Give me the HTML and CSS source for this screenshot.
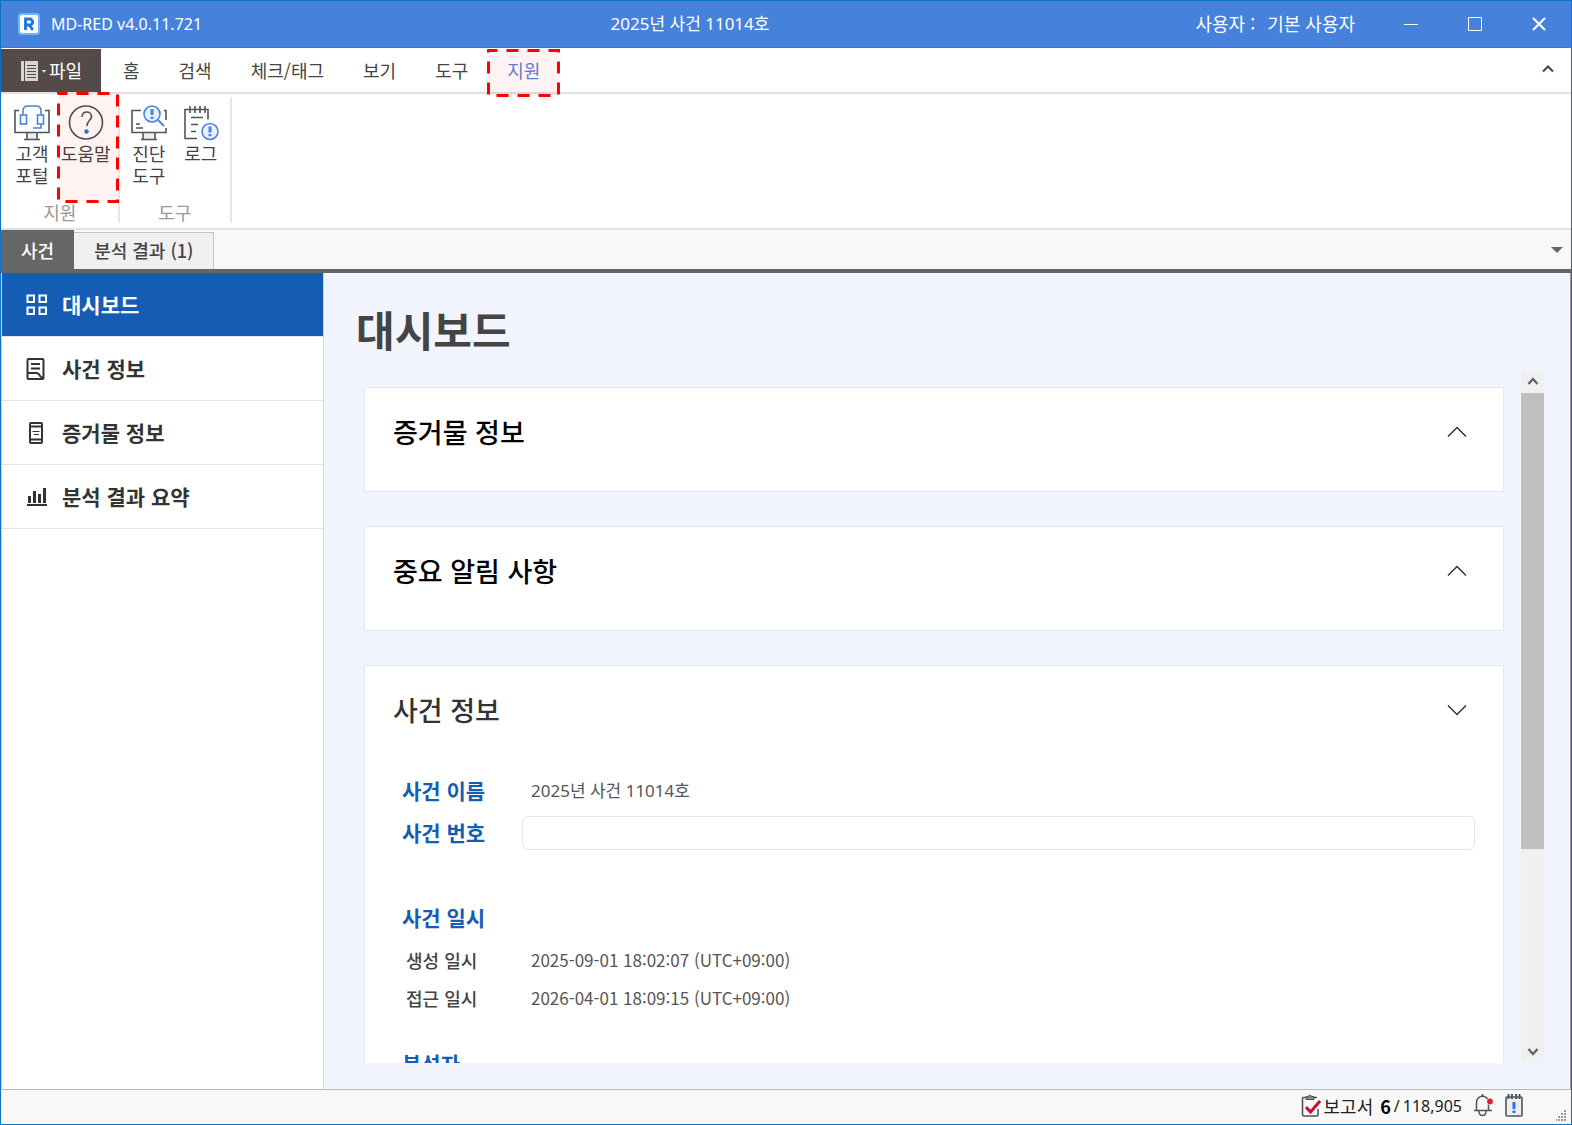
FILE: index.html
```html
<!DOCTYPE html>
<html lang="ko">
  <head>
    <meta charset="UTF-8" />
    <meta name="viewport" content="width=device-width, initial-scale=1.0" />
    <title>MD-RED v4.0.11.721</title>
    <link rel="stylesheet" href="styles.css">
  </head>
  <body>
    <div class="window">
      <header class="titlebar">
        <div class="brand">
          <svg class="logo" width="22" height="22" viewBox="0 0 22 22">
            <rect width="22" height="22" rx="4" fill="#6cb8f8" />
            <rect x="2" y="2" width="18" height="18" rx="2" fill="#fff" />
            <path d="M7.5 17V6h4.2a2.9 2.9 0 0 1 0 6H7.5M11.5 12l3.3 5" fill="none" stroke="#1877e0" stroke-width="2.8" />
          </svg>
          <span>MD-RED v4.0.11.721</span>
        </div>
        <div class="case-title">2025년 사건 11014호</div>
        <div class="user"><span>사용자 :</span><span>기본 사용자</span></div>
        <div class="window-buttons">
          <button aria-label="최소화"><svg width="14" height="14" viewBox="0 0 14 14"><path d="M0 7.5h14" /></svg></button>
          <button aria-label="최대화"><svg width="14" height="14" viewBox="0 0 14 14"><path d="M.5 .5h13v13H.5z" /></svg></button>
          <button aria-label="닫기"><svg class="close" width="14" height="14" viewBox="0 0 14 14"><path d="M1 1l12 12M13 1L1 13" /></svg></button>
        </div>
      </header>

      <nav class="menu">
        <button class="file-btn">
          <svg width="26" height="20" viewBox="0 0 26 20">
            <path d="M0 0h17v20H0z" fill="#d8d4d2" />
            <path d="M3.5 0v20" stroke="#544a49" />
            <path d="M6 4.5h9M6 7.5h9M6 10.5h9M6 13.5h9M6 16.5h9" stroke="#544a49" stroke-width="1.2" />
            <path d="M20.5 9h5L23 11.8z" fill="#ddd" />
          </svg>
          <span>파일</span>
        </button>
        <button class="menu-tab">홈</button>
        <button class="menu-tab">검색</button>
        <button class="menu-tab">체크/태그</button>
        <button class="menu-tab">보기</button>
        <button class="menu-tab">도구</button>
        <button class="menu-tab active">지원
          <svg class="marker marker-tab" width="73" height="48"><rect x="1.5" y="1.5" width="70" height="45" /></svg>
        </button>
        <button class="collapse" aria-label="리본 접기">
          <svg width="12" height="8" viewBox="0 0 12 8"><path d="M1 6.5l5-5 5 5" fill="none" stroke="#444" stroke-width="2" /></svg>
        </button>
      </nav>

      <div class="ribbon">
        <div class="group">
          <div class="tools">
            <button class="tool">
              <svg width="36" height="36" viewBox="0 0 36 36">
                <path d="M13 28h10v6H13z" fill="#eceef0" />
                <g class="ink"><path d="M5 5.5H1v22h34v-22h-4M13 27.5v6.5M23 27.5v6.5M10 34.5h16" /></g>
                <g class="blue"><path d="M9 10V6q0-5 5-5h8q5 0 5 5v4M27 19v4h-8" /><rect x="6.5" y="10" width="6" height="9" /><rect x="23.5" y="10" width="6" height="9" /></g>
              </svg>
              <span>고객<br>포털</span>
            </button>
            <button class="tool">
              <svg width="36" height="36" viewBox="0 0 36 36">
                <circle class="ink warm" cx="18" cy="17.5" r="16.5" />
                <path class="ink warm" d="M14 12c0-7 9.5-6 9.5-.8 0 4.3-4.6 4.5-4.6 9.8" />
                <circle cx="18.5" cy="26.5" r="2.3" fill="#2f73e0" />
              </svg>
              <span>도움말</span>
              <svg class="marker marker-help" width="62" height="111"><rect x="1.5" y="1.5" width="59" height="108" /></svg>
            </button>
          </div>
          <div class="group-name">지원</div>
        </div>
        <div class="group">
          <div class="tools">
            <button class="tool">
              <svg width="36" height="36" viewBox="0 0 36 36">
                <path d="M12 28h12v6H12z" fill="#eceef0" />
                <g class="ink"><path d="M10 5.5H1v22h34V23M33 5.5h2V15M12 27.5v6.5M24 27.5v6.5M10 34.5h16M5 19h4M5 23h7" /></g>
                <g class="blue"><circle cx="21" cy="9" r="8" fill="#e8f1ff" /><path d="M27 15l6 6" stroke-width="2" /><path class="mark" d="M21 4v6M21 11.8v2.2" /></g>
              </svg>
              <span>진단<br>도구</span>
            </button>
            <button class="tool">
              <svg width="36" height="36" viewBox="0 0 36 36">
                <g class="ink"><path d="M14 33.5H2v-29h23v10M7 1v7M12 1v7M17 1v7M22 1v7M8 12.5h12M8 19.5h7M8 26.5h5" /></g>
                <g class="blue"><circle cx="27" cy="26.5" r="8" fill="#e8f1ff" /><path class="mark" d="M27 21.5v6M27 29v2.2" /></g>
              </svg>
              <span>로그</span>
            </button>
          </div>
          <div class="group-name">도구</div>
        </div>
      </div>

      <div class="doc-tabs">
        <button class="doc-tab selected">사건</button>
        <button class="doc-tab">분석 결과 (1)</button>
        <button class="tab-list" aria-label="탭 목록"><span class="triangle"></span></button>
      </div>

      <div class="workspace">
        <nav class="sidebar">
          <a class="side-item current" href="#dashboard">
            <svg width="22" height="22" viewBox="0 0 22 22"><path d="M1.5 1.5H8V8H1.5zM13.5 1.5H20V8h-6.5zM1.5 13.5H8V20H1.5zM13.5 13.5H20V20h-6.5z" /></svg>
            <span>대시보드</span>
          </a>
          <a class="side-item" href="#case">
            <svg width="22" height="22" viewBox="0 0 22 22"><path d="M1.5 2q0-1 1-1h14q1 0 1 1v18q0 1-1 1h-14q-1 0-1-1zM5 6h9M5 10.5h9M2 15h8q3 0 4 3l3 2.5" /></svg>
            <span>사건 정보</span>
          </a>
          <a class="side-item" href="#evidence">
            <svg width="22" height="22" viewBox="0 0 22 22"><path d="M4 2q0-1 1-1h10q1 0 1 1v18q0 1-1 1H5q-1 0-1-1zM4 4.500h12M4 17.500h12" /><path class="thin" d="M6.5 9.5h7M8 12.5h5" /></svg>
            <span>증거물 정보</span>
          </a>
          <a class="side-item" href="#summary">
            <svg width="22" height="22" viewBox="0 0 22 22"><path d="M1 19h20" /><path class="bar" d="M3.5 17v-7M8.5 17V5M13.5 17V8M18.5 17V2" /></svg>
            <span>분석 결과 요약</span>
          </a>
        </nav>

        <main class="main">
          <h1>대시보드</h1>
          <div class="scroll">
            <div class="cards">
              <section class="card">
                <div class="card-head">
                  <h2>증거물 정보</h2>
                  <button class="toggle" aria-label="펼치기"><svg width="20" height="12" viewBox="0 0 20 12"><path d="M1 10.5l9-9 9 9" /></svg></button>
                </div>
              </section>
              <section class="card">
                <div class="card-head">
                  <h2>중요 알림 사항</h2>
                  <button class="toggle" aria-label="펼치기"><svg width="20" height="12" viewBox="0 0 20 12"><path d="M1 10.5l9-9 9 9" /></svg></button>
                </div>
              </section>
              <section class="card case">
                <div class="card-head">
                  <h2>사건 정보</h2>
                  <button class="toggle" aria-label="접기"><svg width="20" height="12" viewBox="0 0 20 12"><path d="M1 1.5l9 9 9-9" /></svg></button>
                </div>
                <div class="fields">
                  <div class="field">
                    <span class="label">사건 이름</span>
                    <span class="value name">2025년 사건 11014호</span>
                  </div>
                  <div class="field">
                    <label class="label" for="caseNumber">사건 번호</label>
                    <input id="caseNumber" type="text">
                  </div>
                </div>
                <div class="fields">
                  <div class="field heading"><span class="label">사건 일시</span></div>
                  <div class="field sub">
                    <span class="label">생성 일시</span>
                    <span class="value">2025-09-01 18:02:07 (UTC+09:00)</span>
                  </div>
                  <div class="field sub">
                    <span class="label">접근 일시</span>
                    <span class="value">2026-04-01 18:09:15 (UTC+09:00)</span>
                  </div>
                </div>
                <div class="fields analyst">
                  <div class="field"><span class="label">분석자</span></div>
                </div>
              </section>
            </div>
            <div class="scrollbar">
              <button aria-label="위로"><svg width="12" height="10" viewBox="0 0 12 10"><path d="M1.5 7L6 2l4.5 5" /></svg></button>
              <div class="track"><div class="thumb"></div></div>
              <button aria-label="아래로"><svg width="12" height="10" viewBox="0 0 12 10"><path d="M1.5 2L6 7l4.5-5" /></svg></button>
            </div>
          </div>
        </main>
      </div>

      <footer class="statusbar">
        <div class="report">
          <svg width="20" height="23" viewBox="0 0 20 23">
            <path d="M5 3.5H2.5q-1 0-1 1v16q0 1.5 1.5 1.5h13q1 0 1-1v-6M12 3.5h4" fill="none" stroke="#50555c" stroke-width="1.6" />
            <path d="M5 2.5h2q1.5-3 4 0h2v3H5z" fill="#888" stroke="#50555c" />
            <path d="M5 13l4.5 5L19 7" fill="none" stroke="#c8102e" stroke-width="3" />
          </svg>
          <span>보고서</span>
          <strong>6</strong>
          <span class="count">/</span>
          <span class="count">118,905</span>
        </div>
        <button class="status-btn" aria-label="알림">
          <svg width="21" height="23" viewBox="0 0 21 23">
            <path d="M1 16.5h18M3.5 16V9q0-6 6-7 6 1 6 7v7M6 17q0 4.5 3.5 4.5T13 17M9.5 0v2" fill="none" stroke="#50555c" stroke-width="1.5" />
            <circle cx="17" cy="7.5" r="3.5" fill="#f8f8f8" /><circle cx="17" cy="7.5" r="2.9" fill="#e02030" />
          </svg>
        </button>
        <button class="status-btn" aria-label="로그">
          <svg width="18" height="23" viewBox="0 0 18 23">
            <rect x="1" y="3" width="16" height="19" rx="1" fill="#eceef0" stroke="#50555c" stroke-width="1.6" />
            <path d="M3.5 0v5M7 0v5M11 0v5M14.5 0v5" stroke="#50555c" stroke-width="2" />
            <path d="M9 8v7M9 16.5v2.5" stroke="#2f73e0" stroke-width="3" />
          </svg>
        </button>
        <svg class="grip" width="11" height="11" viewBox="0 0 11 11"><path d="M8 1h2M5 4h2M8 4h2M2 7h2M5 7h2M8 7h2M-1 10h2M2 10h2M5 10h2M8 10h2" stroke="#999" stroke-width="2" /></svg>
      </footer>
    </div>
  </body>
</html>
```
FILE: styles.css
```css
* {
  box-sizing: border-box;
}

body {
  margin: 0;
  font-family: "Noto Sans CJK KR", sans-serif;
  font-size: 18px;
  line-height: 22px;
  color: #444;
}

button {
  margin: 0;
  padding: 0;
  border: none;
  background: none;
  font: inherit;
  color: inherit;
}

.window {
  display: flex;
  flex-direction: column;
  height: 100vh;
  border: 1px solid #0a73c8;
  background-color: white;
}

/* title bar */
.titlebar {
  display: grid;
  grid-template-columns: 1fr auto 1fr auto;
  align-items: center;
  height: 47px;
  background-color: #4681dc;
  border-bottom: 1px solid #3f78d3;
  color: white;
}

.brand {
  display: flex;
  align-items: center;
  gap: 11px;
  padding-left: 17px;
}

.brand,
.count {
  font-family: "Noto Sans", "Noto Sans CJK KR", sans-serif;
  font-size: 16px;
}

.case-title,
.name {
  font-family: "Noto Sans", "Noto Sans CJK KR", sans-serif;
  font-size: 17px;
}

.user {
  display: flex;
  justify-content: flex-end;
  gap: 12px;
  padding: 0 24px 2px 0;
}

.window-buttons {
  display: flex;
}

.window-buttons button {
  display: flex;
  align-items: center;
  justify-content: center;
  width: 64px;
  height: 46px;
}

.window-buttons svg {
  fill: none;
  stroke: white;
}

.window-buttons .close {
  stroke-width: 2;
}

/* menu */
.menu {
  display: flex;
  height: 46px;
  border-bottom: 2px solid #e1e1e1;
}

.file-btn {
  display: flex;
  align-items: center;
  gap: 2px;
  width: 100px;
  margin: 1px 3px 0 0;
  padding-left: 20px;
  background-color: #544a49;
  color: white;
}

.file-btn span {
  padding-bottom: 2px;
}

.menu-tab {
  position: relative;
  padding: 0 20px 0 19px;
}

.menu-tab.active {
  color: #5b84d8;
}

.collapse {
  display: flex;
  align-items: center;
  margin-left: auto;
  padding: 0 17px 2px;
}

/* dashed callout frames */
.marker {
  position: absolute;
  pointer-events: none;
}

.marker rect {
  fill: rgba(255, 0, 0, 0.05);
  stroke: red;
  stroke-width: 3px;
  stroke-dasharray: 12 9;
  stroke-dashoffset: 3px;
}

.marker-tab {
  top: 1px;
  left: -1px;
}

.marker-help {
  top: -5px;
  left: -1px;
}

/* ribbon */
.ribbon {
  display: flex;
  height: 136px;
  padding: 3px 0 5px;
  border-bottom: 2px solid #e1e1e1;
}

.group {
  display: flex;
  flex-direction: column;
  justify-content: space-between;
  padding: 0 3px;
  border-right: 2px solid #e6e6e6;
}

.group:first-child {
  padding: 0 4px 0 5px;
}

.tools {
  display: flex;
}

.tool {
  position: relative;
  display: flex;
  flex-direction: column;
  align-items: center;
  gap: 1px;
  min-width: 52px;
  padding: 8px 3px 0;
}

.ink {
  fill: none;
  stroke: #50555c;
  stroke-width: 1.6px;
}

.ink.warm {
  stroke: #5a4b4d;
}

.blue {
  fill: none;
  stroke: #4a84e2;
  stroke-width: 1.6px;
}

.blue .mark {
  stroke-width: 3px;
}

.group-name {
  text-align: center;
  color: #999;
}

/* document tabs */
.doc-tabs {
  display: flex;
  height: 43px;
  background-color: #f8f8f8;
  border-bottom: 4px solid #666;
}

.doc-tab {
  margin-top: 2px;
  padding: 0 19px 2px 20px;
  background-color: #f0f0f0;
  border: 1px solid #c4c4c4;
  border-width: 1px 1px 0 0;
  font-weight: 500;
}

.doc-tab.selected {
  margin: 0;
  padding: 0 20px;
  background-color: #666;
  border: none;
  color: white;
}

.tab-list {
  margin-left: auto;
  padding: 0 8px;
}

.triangle {
  display: block;
  border: 6px solid transparent;
  border-top-color: #666;
  border-bottom: none;
}

/* sidebar */
.workspace {
  display: flex;
  flex: 1;
  min-height: 0;
  border-right: 1px solid #999;
}

.sidebar {
  flex: none;
  width: 323px;
  border: 1px solid #d2d5dc;
  border-width: 0 1px;
}

.side-item {
  display: flex;
  align-items: center;
  gap: 14px;
  height: 64px;
  padding-left: 24px;
  border-bottom: 1px solid #e0e4ee;
  font-size: 21px;
  font-weight: 700;
  color: #333;
  text-decoration: none;
}

.side-item span {
  padding-bottom: 2px;
}

.side-item svg {
  fill: none;
  stroke: currentColor;
  stroke-width: 2px;
}

.side-item .thin {
  stroke-width: 1px;
}

.side-item .bar {
  stroke-width: 3px;
}

.side-item.current {
  background-color: #155cb4;
  color: white;
}

/* dashboard */
.main {
  display: flex;
  flex: 1;
  flex-direction: column;
  min-width: 0;
  padding: 31px 26px 26px 32px;
  background-color: #f2f5fe;
}

h1 {
  margin: 0 0 16px;
  font-size: 42px;
  line-height: 50px;
}

h2 {
  margin: 0;
  font-size: 27px;
  font-weight: 500;
  line-height: 40px;
  color: black;
}

.scroll {
  display: flex;
  flex: 1;
  gap: 17px;
  min-height: 0;
}

.cards {
  display: flex;
  flex: 1;
  flex-direction: column;
  gap: 34px;
  padding: 17px 0 0 8px;
  overflow: hidden;
}

.card {
  flex: none;
  padding: 24px 28px 39px;
  background-color: white;
  border: 1px solid #dfe7fd;
}

.card-head {
  display: flex;
  align-items: center;
  justify-content: space-between;
  padding-right: 8px;
}

.toggle {
  display: flex;
}

.toggle svg {
  fill: none;
  stroke: #333;
  stroke-width: 1.5px;
}

.case h2 {
  color: #333;
}

.fields {
  margin-top: 40px;
  padding-left: 9px;
}

.fields.analyst {
  margin-top: 25px;
}

.field {
  display: flex;
  align-items: center;
  height: 42px;
}

.label,
.value {
  padding-bottom: 2px;
}

.label {
  flex: none;
  width: 120px;
  font-size: 21px;
  font-weight: 700;
  color: #155cb4;
}

.value {
  padding-left: 9px;
  font-size: 17px;
  color: #555;
}

.value.name {
  padding-bottom: 0;
}

.field input {
  flex: 1;
  height: 34px;
  padding: 0 9px;
  border: 1px solid #e4e5f0;
  border-radius: 6px;
  font: inherit;
}

.heading {
  height: 48px;
}

.sub {
  height: 38px;
}

.sub .label {
  padding-left: 4px;
  font-size: 18px;
  font-weight: 500;
  color: #444;
}

/* scroll bar */
.scrollbar {
  display: flex;
  flex-direction: column;
  width: 23px;
  background-color: #f0f0f0;
}

.scrollbar button {
  display: flex;
  align-items: center;
  justify-content: center;
  height: 23px;
}

.scrollbar path {
  fill: none;
  stroke: #666;
  stroke-width: 2.4px;
}

.track {
  flex: 1;
}

.thumb {
  height: 70.5%;
  background-color: #bfbfbf;
}

/* status bar */
.statusbar {
  display: flex;
  align-items: center;
  justify-content: flex-end;
  gap: 11px;
  height: 35px;
  padding: 0 4px 3px 0;
  background-color: #f8f8f8;
  border-top: 1px solid #b8b8bc;
  color: #222;
}

.report {
  display: flex;
  align-items: center;
  gap: 3px;
}

.report strong {
  padding-left: 4px;
  color: black;
}

.status-btn {
  display: flex;
}

.grip {
  align-self: flex-end;
  margin-left: 22px;
}
```
